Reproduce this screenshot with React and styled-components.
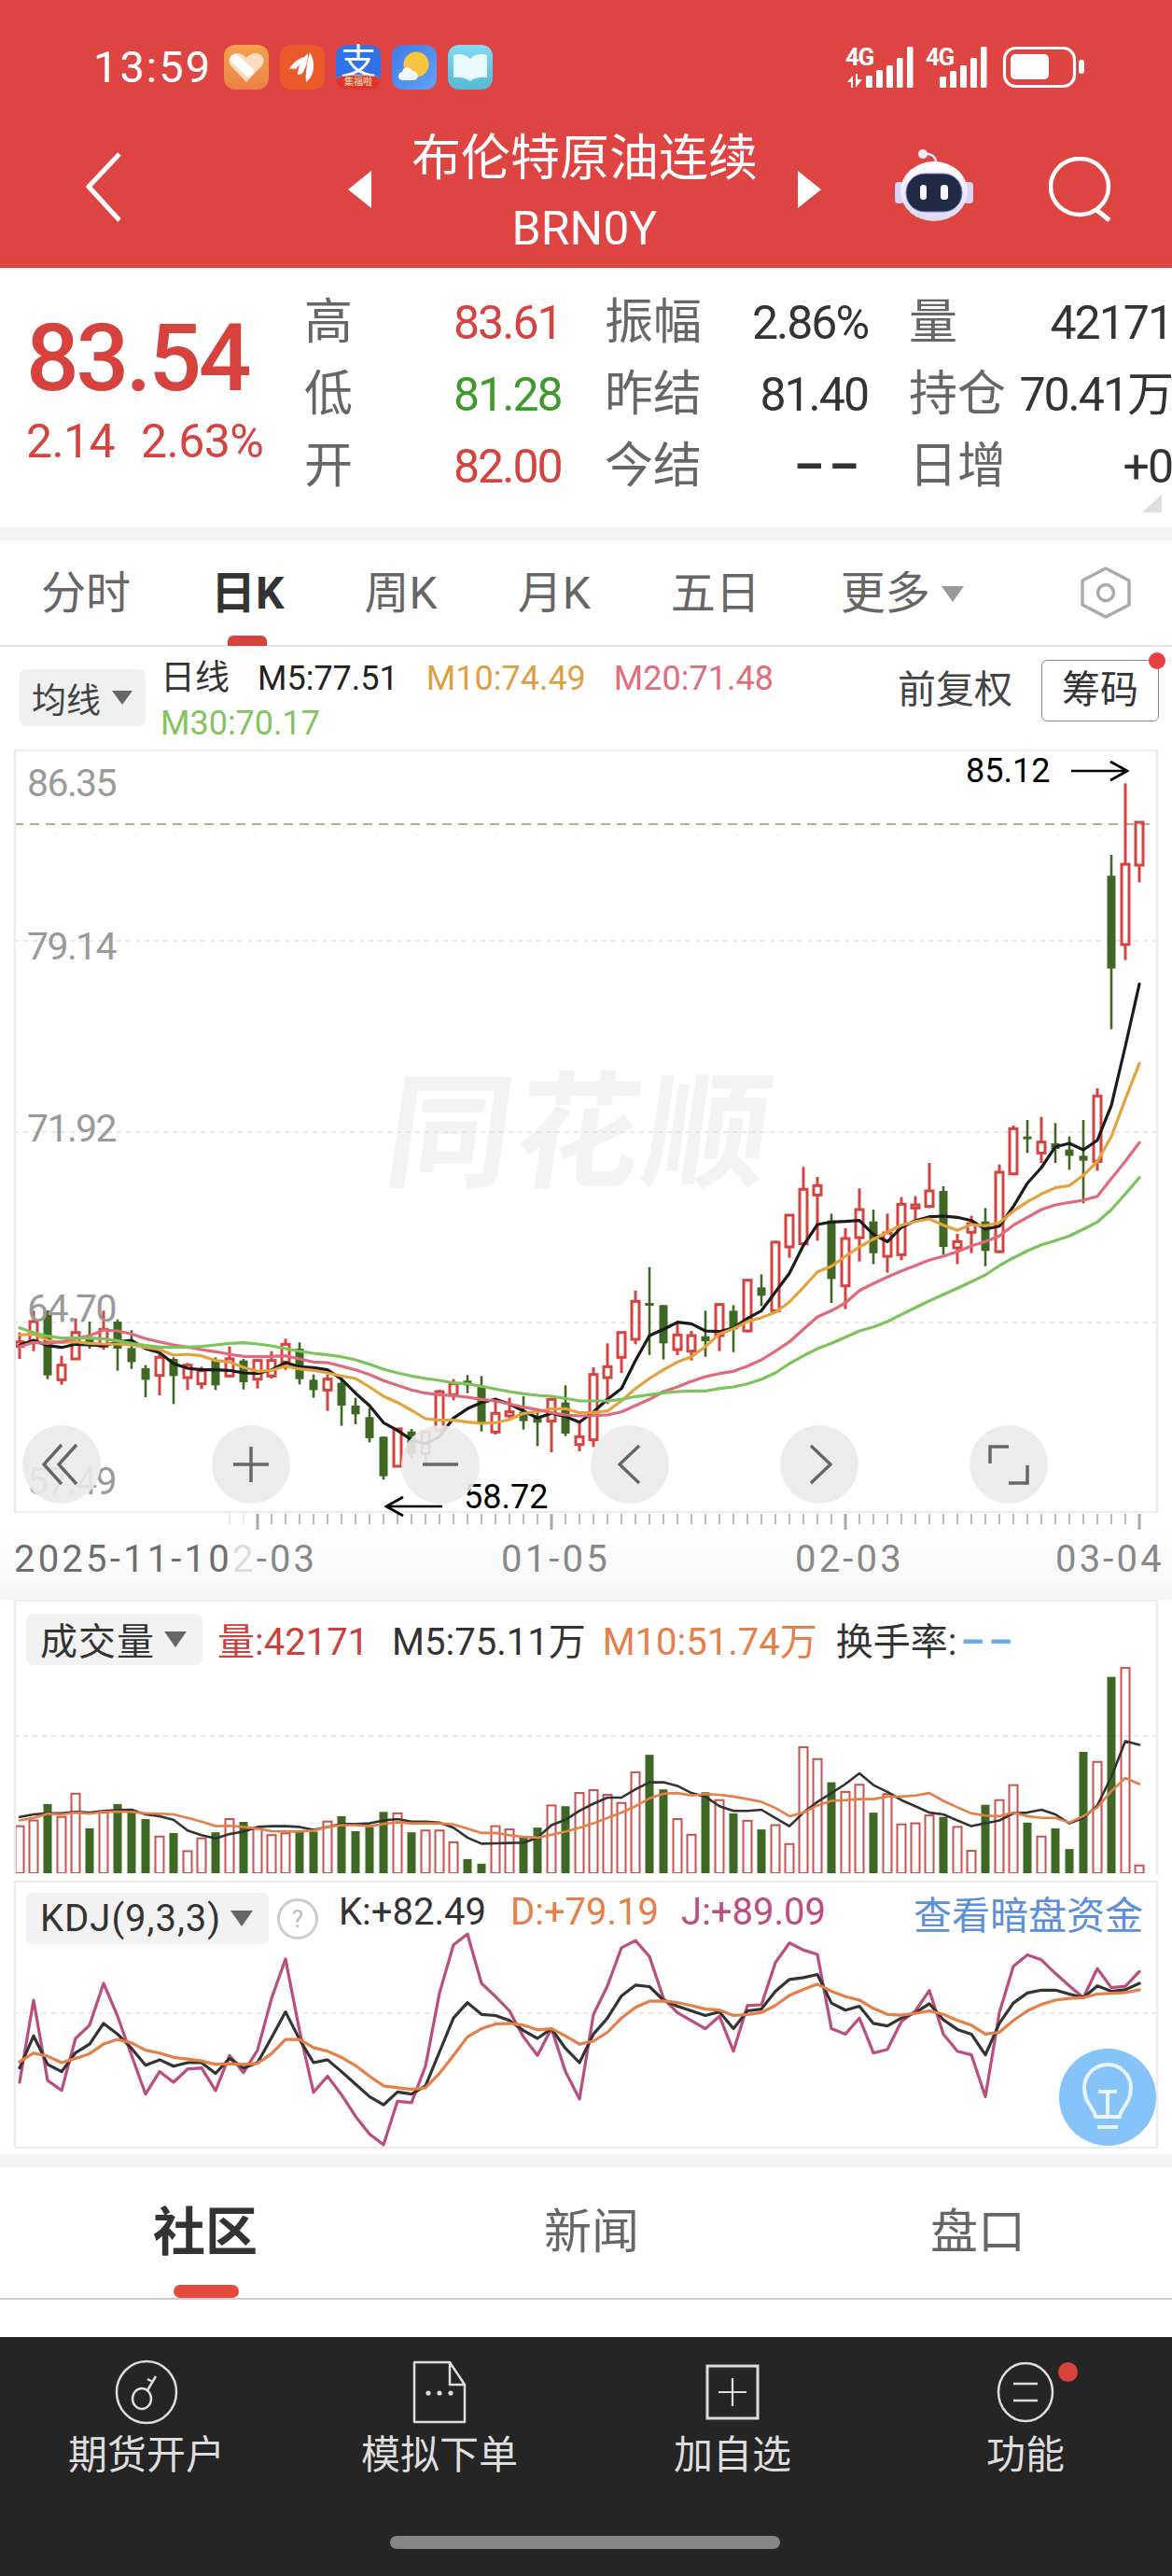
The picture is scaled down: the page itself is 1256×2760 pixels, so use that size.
import styled, { createGlobalStyle } from "styled-components";

// chart series, sampled row by row from the screen
const candles = [
  [560,645,590,605,1],[490,620,525,590,1],[490,710,490,698,0],[635,728,665,712,1],[515,645,560,645,1],
  [525,612,575,600,0],[490,615,550,605,1],[518,683,525,612,0],[553,677,610,655,0],[665,768,675,712,0],
  [625,762,640,698,1],[640,790,645,700,0],[658,745,665,705,1],[670,742,683,725,1],[640,745,650,730,0],
  [605,700,645,700,1],[645,743,650,720,0],[645,740,650,710,1],[620,708,650,700,1],[580,680,598,655,1],
  [592,727,612,710,0],[695,770,712,745,0],[695,812,710,745,1],[710,860,722,795,0],[770,855,795,823,0],
  [803,913,832,900,0],[895,1033,895,1022,0],[870,990,870,990,1],[870,965,878,950,0],[875,980,880,950,1],
  [745,880,750,875,1],[710,778,725,760,1],[697,755,715,730,0],[700,878,735,850,0],[770,888,820,880,1],
  [770,835,815,828,1],[765,872,815,845,0],[812,925,830,850,0],[770,945,775,845,1],[730,893,785,885,0],
  [850,942,895,920,1],[672,928,695,905,1],[595,790,670,705,1],[558,690,560,640,1],[425,598,460,582,1],
  [350,632,465,470,0],[472,647,472,595,0],[525,633,568,615,1],[555,650,570,620,1],[490,638,572,588,0],
  [465,620,470,570,1],[472,623,490,550,0],[390,560,392,555,1],[373,475,415,442,0],[265,495,270,490,1],
  [180,320,183,285,1],[28,275,100,275,1],[60,265,88,118,1],[178,465,200,388,0],[225,485,258,410,1],
  [97,332,165,255,1],[165,340,203,305,0],[178,368,240,315,1],[125,328,148,310,1],[122,195,150,160,1],
  [15,160,105,155,1],[90,310,105,285,0],[243,340,268,288,1],[185,305,210,238,1],[160,347,203,298,0],
  [20,305,45,300,1],[-105,55,-95,50,1],[-123,-17,-70,-63,0],[-133,15,-52,-17,1],[-113,15,-48,-30,0],
  [-70,37,-28,-8,0],[-123,145,-8,8,0],[-225,40,-200,10,1],[-975,-415,-908,-610,0],[-1205,-637,-945,-687,1],
  [-1080,-887,-1080,-942,1],
];
const ma5 = [600,585,602,608,598,600,603,590,585,612,625,660,675,680,680,682,690,692,680,657,670,673,680,710,755,795,850,875,905,918,895,835,805,785,775,790,812,835,820,830,848,815,775,740,650,570,550,527,532,555,557,545,515,490,430,370,280,213,205,203,200,245,268,222,200,188,186,190,200,228,218,155,80,30,-37,-48,-27,-58,-170,-360,-560];
const ma10 = [568,565,585,592,590,595,597,597,600,608,615,633,630,635,650,655,672,685,682,668,677,682,690,700,708,735,765,785,810,837,842,842,848,852,850,840,820,815,805,805,818,817,812,780,740,708,680,655,638,605,565,548,525,512,495,462,415,365,347,315,285,260,238,215,203,195,215,232,213,217,207,170,140,115,95,88,55,10,-70,-190,-305];
const ma20 = [605,592,595,590,580,570,552,555,565,580,590,600,607,615,622,630,637,638,637,635,645,655,657,668,680,695,715,730,745,755,760,763,768,775,780,790,800,808,818,825,828,827,825,815,795,775,750,735,717,702,692,685,668,648,620,590,550,510,490,465,425,403,382,362,345,327,315,300,282,268,250,215,190,165,150,142,135,122,65,10,-50];
const ma30 = [545,560,572,578,578,578,580,587,595,602,607,607,607,605,600,595,593,597,603,612,620,627,632,638,648,662,678,690,700,708,714,722,725,733,742,750,757,762,765,772,780,780,780,775,766,760,754,750,748,748,740,735,725,710,690,660,635,612,595,575,555,542,525,502,480,458,438,418,397,375,345,320,298,278,265,250,228,205,165,115,62];
// negative = down day
const volumes = [668,652,-606,642,577,-674,630,-606,-628,-648,697,-687,738,702,-685,648,-656,675,693,688,-680,-683,655,-640,-682,-670,-628,632,-685,680,680,713,-760,-773,668,677,-700,-672,610,-612,575,567,580,603,517,-468,-565,648,692,-573,595,-632,653,-677,665,718,447,480,-545,572,552,-630,578,663,660,638,-642,670,737,-608,595,553,-658,697,-674,-732,-460,488,-250,225,778];
const volM5 = [642,635,632,632,628,630,625,623,622,635,640,650,680,693,702,690,683,670,668,668,670,678,670,662,662,660,652,648,655,655,658,672,700,717,716,715,714,700,665,650,625,605,588,588,565,545,545,555,575,585,612,625,625,622,645,668,630,600,575,550,520,553,572,595,612,630,635,652,668,660,652,632,630,622,635,660,645,610,530,430,440];
const volM10 = [652,645,633,635,630,633,628,627,628,632,633,635,645,655,668,667,670,675,682,683,683,680,670,665,665,668,662,657,660,660,660,663,675,687,687,693,698,700,692,683,672,660,645,630,612,590,577,575,582,578,580,585,592,600,617,640,630,610,597,595,592,592,585,585,582,575,597,615,632,638,640,630,640,645,645,658,640,615,570,533,550];
const kdjJ = [1385,1155,1380,1408,1262,1225,1108,1200,1310,1418,1355,1385,1348,1345,1408,1310,1358,1295,1150,1040,1240,1413,1368,1420,1480,1530,1560,1438,1442,1340,1135,1000,970,1108,1145,1185,1258,1310,1235,1355,1432,1195,1115,1008,988,1033,1150,1190,1213,1235,1200,1298,1170,1168,1050,995,1015,1027,1235,1250,1205,1303,1293,1215,1185,1128,1250,1298,1308,1425,1190,1060,1028,1042,1080,1115,1148,1067,1120,1116,1075];
const kdjK = [1345,1255,1335,1355,1302,1278,1220,1250,1290,1337,1322,1340,1330,1330,1360,1318,1345,1330,1260,1188,1265,1330,1322,1355,1390,1425,1448,1412,1418,1395,1300,1205,1162,1195,1198,1212,1240,1262,1235,1290,1330,1250,1205,1143,1113,1117,1155,1172,1185,1198,1188,1235,1185,1180,1130,1097,1092,1083,1163,1183,1172,1220,1227,1205,1190,1165,1210,1237,1250,1308,1220,1163,1135,1127,1127,1138,1148,1115,1130,1126,1108];
const kdjD = [1328,1303,1312,1330,1318,1305,1278,1265,1275,1295,1303,1315,1320,1325,1335,1333,1335,1332,1305,1265,1265,1288,1298,1315,1338,1368,1395,1400,1405,1400,1360,1310,1258,1235,1222,1220,1225,1238,1235,1255,1278,1270,1245,1205,1175,1158,1157,1162,1170,1180,1183,1198,1195,1190,1170,1142,1125,1110,1130,1145,1155,1178,1195,1197,1192,1185,1195,1212,1225,1250,1245,1212,1185,1167,1155,1150,1148,1138,1136,1134,1126];

const xAt = (i) => 21 + 15 * i;
const priceY = (v) => 1240 + v / 3;
const lowerY = (v) => 1700 + v / 2.613;

const RED = "#d6433f";
const GREEN = "#3e6823";

function Series({ data, toY, color, width = 3.2 }) {
    const points = data.map((v, i) => `${xAt(i)},${toY(v).toFixed(1)}`).join(" ");
    return <polyline points={points} fill="none" stroke={color} strokeWidth={width} strokeLinejoin="round" strokeLinecap="round" />;
}

function Candle({ i, c }) {
    const [hi, lo, top, bottom, up] = c;
    const x = xAt(i);
    const color = up ? RED : GREEN;
    if (up) {
        return (
            <g stroke={color} fill="none">
                <line x1={x} x2={x} y1={priceY(hi)} y2={priceY(top)} strokeWidth="3" />
                <line x1={x} x2={x} y1={priceY(bottom)} y2={priceY(lo)} strokeWidth="3" />
                <rect x={x - 4} y={priceY(top)} width="8" height={Math.max(3, (bottom - top) / 3)} strokeWidth="3" />
            </g>
        );
    }
    return (
        <g fill={color} stroke={color}>
            <line x1={x} x2={x} y1={priceY(hi)} y2={priceY(lo)} strokeWidth="2.6" />
            <rect x={x - 4.5} y={priceY(top)} width="9" height={Math.max(3, (bottom - top) / 3)} stroke="none" />
        </g>
    );
}

function Grid({ ys, color = "#e2e2e2", dash = "5 5" }) {
    return ys.map((y) => <line key={y} x1="15" x2="1241" y1={y} y2={y} stroke={color} strokeWidth="1.3" strokeDasharray={dash} />);
}

export default function App() {
    return (
        <Page>
            <Global />
            <Header>
                <StatusBar>
                    <Time>13:59</Time>
                    <AppIcons>
                        <AppIcon $bg="linear-gradient(#f4a14f,#ec8146)">
                            <svg viewBox="0 0 48 48" width="48" height="48">
                                <path d="M24 40 7 22C3 16 7 9 14 9c4 0 7 2 10 5 3-3 6-5 10-5 7 0 11 7 7 13Z" fill="#fbdcc0" />
                                <path d="M12 15 27 29" stroke="#fff" strokeWidth="10" strokeLinecap="round" />
                            </svg>
                        </AppIcon>
                        <AppIcon $bg="#eb5a2b">
                            <svg viewBox="0 0 48 48" width="48" height="48">
                                <g fill="#fff">
                                    <path d="M10 26c4-7 10-12 17-13-3 6-7 9-10 13-3-1-5 0-7 0Z" />
                                    <path d="M19 32c0-9 5-17 11-23 0 8-2 15-6 22Z" />
                                    <path d="M28 40c-1-10 1-21 4-32 6 10 6 24-4 32Z" />
                                </g>
                            </svg>
                        </AppIcon>
                        <AppIcon $bg="#2f72ea">
                            <AlipayChar>支</AlipayChar>
                            <AlipayBand>集福啦</AlipayBand>
                        </AppIcon>
                        <AppIcon $bg="linear-gradient(135deg,#3f7bea,#62a1f4)">
                            <svg viewBox="0 0 48 48" width="48" height="48">
                                <circle cx="26" cy="21" r="13.5" fill="#f7c53f" />
                                <path d="M12 38c-6 0-7-8-1-9 1-6 9-6 11-1 7 0 8 10 1 10Z" fill="#f2f7fd" />
                            </svg>
                        </AppIcon>
                        <AppIcon $bg="linear-gradient(#7fdcef,#58b9d2)">
                            <svg viewBox="0 0 48 48" width="48" height="48">
                                <path d="M6 11c6-2 13-1 18 4v24c-5-4-12-5-18-4Zm36 0c-6-2-13-1-18 4v24c5-4 12-5 18-4Z" fill="#e9fbff" />
                            </svg>
                        </AppIcon>
                    </AppIcons>
                    <Signals>
                        <svg viewBox="0 0 256 46" width="256" height="46">
                            <g fill="#fff" stroke="none">
                                <path d="M2 39l6-7v13h-2v-6ZM11 30h2v6h5l-7 9Z" />
                                <rect x="22" y="32" width="7" height="13" rx="1.5" />
                                <rect x="33" y="26" width="7" height="19" rx="1.5" />
                                <rect x="44" y="21" width="7" height="24" rx="1.5" />
                                <rect x="55" y="13" width="6.5" height="32" rx="1.5" />
                                <rect x="66" y="1" width="6.5" height="44" rx="1.5" />
                                <rect x="101" y="33" width="7" height="12" rx="1.5" />
                                <rect x="112" y="27" width="7" height="18" rx="1.5" />
                                <rect x="123" y="21" width="7" height="24" rx="1.5" />
                                <rect x="134" y="13" width="7" height="32" rx="1.5" />
                                <rect x="145" y="1" width="6.5" height="44" rx="1.5" />
                                <rect x="177" y="9" width="41" height="27" rx="5" />
                                <rect x="250" y="15" width="6" height="15" rx="3" />
                            </g>
                            <rect x="170.5" y="2.5" width="75" height="41" rx="12" fill="none" stroke="#fff" strokeWidth="3.2" />
                        </svg>
                        <FourG $left="0">4G</FourG>
                        <FourG $left="86">4G</FourG>
                    </Signals>
                </StatusBar>
                <NavRow>
                    <BackButton>
                        <svg viewBox="0 0 38 75" width="38" height="75"><path d="M36 2 3 37l33 36" fill="none" stroke="#fff" strokeWidth="5" /></svg>
                    </BackButton>
                    <TitleBlock>
                        <SideArrow $dir="left" />
                        <TitleText>
                            <Title>布伦特原油连续</Title>
                            <Code>BRN0Y</Code>
                        </TitleText>
                        <SideArrow $dir="right" />
                    </TitleBlock>
                    <NavTools>
                        <svg viewBox="0 0 84 78" width="84" height="78">
                            <defs>
                                <linearGradient id="helmet" x1="0" y1="0" x2="0" y2="1">
                                    <stop offset="0" stopColor="#fff" />
                                    <stop offset="1" stopColor="#ddd9f3" />
                                </linearGradient>
                            </defs>
                            <path d="M30 5c8-1 14 2 14 9" fill="none" stroke="#f1eefb" strokeWidth="2.5" />
                            <circle cx="30" cy="5" r="5" fill="#f1eefb" />
                            <rect x="0" y="35" width="10" height="23" rx="4" fill="#d9d4f1" />
                            <rect x="74" y="35" width="10" height="23" rx="4" fill="#d9d4f1" />
                            <ellipse cx="42" cy="45" rx="36" ry="32" fill="url(#helmet)" />
                            <rect x="12" y="26" width="60" height="41" rx="20" fill="#1f2a44" stroke="#8f7fd6" strokeWidth="1" />
                            <rect x="27" y="38" width="7" height="16" rx="3.5" fill="#f6f7fd" />
                            <rect x="49" y="38" width="8" height="16" rx="3.5" fill="#f6f7fd" />
                        </svg>
                        <SearchIcon viewBox="0 0 68 70" width="68" height="70"><ellipse cx="33" cy="32" rx="31" ry="30" fill="none" stroke="#fff" strokeWidth="4.5" /><path d="M50 56 65 68" stroke="#fff" strokeWidth="5" /></SearchIcon>
                    </NavTools>
                </NavRow>
            </Header>

            <Quote>
                <PriceCol>
                    <LastPrice>83.54</LastPrice>
                    <ChangeRow>
                        <span>2.14</span>
                        <span>2.63%</span>
                    </ChangeRow>
                </PriceCol>
                <StatGrid>
                    <StatLabel>高</StatLabel><StatValue $color={RED}>83.61</StatValue>
                    <StatLabel>振幅</StatLabel><StatValue $right>2.86%</StatValue><i />
                    <StatLabel>量</StatLabel><StatValue $right>42171</StatValue>
                    <StatLabel>低</StatLabel><StatValue $color="#3f9a2c">81.28</StatValue>
                    <StatLabel>昨结</StatLabel><StatValue $right>81.40</StatValue><i />
                    <StatLabel>持仓</StatLabel><StatValue $right>70.41万</StatValue>
                    <StatLabel>开</StatLabel><StatValue $color={RED}>82.00</StatValue>
                    <StatLabel>今结</StatLabel><StatValue $right><EmptyDash>––</EmptyDash></StatValue><i />
                    <StatLabel>日增</StatLabel><StatValue $right>+0</StatValue>
                </StatGrid>
                <CornerMark />
            </Quote>
            <Band />

            <PeriodTabs>
                <PeriodTab>分时</PeriodTab>
                <PeriodTab $active>日K</PeriodTab>
                <PeriodTab>周K</PeriodTab>
                <PeriodTab>月K</PeriodTab>
                <PeriodTab>五日</PeriodTab>
                <PeriodTab>更多<Caret $size={12} $color="#9a9a9a" /></PeriodTab>
                <HexButton>
                    <svg viewBox="0 0 56 56" width="56" height="56"><path d="M28 2 53 15v26L28 54 3 41V15Z" fill="none" stroke="#aaa" strokeWidth="3.5" strokeLinejoin="round" /><circle cx="28" cy="28" r="8.5" fill="none" stroke="#aaa" strokeWidth="3.5" /></svg>
                </HexButton>
            </PeriodTabs>

            <MaBar>
                <MaPill>均线<Caret $size={11} $color="#666" /></MaPill>
                <MaValues>
                    <MaText $color="#333" $cjk>日线</MaText>
                    <MaText $color="#222">M5:77.51</MaText>
                    <MaText $color="#dca043">M10:74.49</MaText>
                    <MaText $color="#e26c7c">M20:71.48</MaText>
                    <MaText $color="#82c45f">M30:70.17</MaText>
                </MaValues>
                <AdjustText>前复权</AdjustText>
                <ChipButton>筹码<RedDot /></ChipButton>
            </MaBar>

            <PriceChart>
                <Watermark>同花顺</Watermark>
                <ChartSvg viewBox="17 804 1222 814" width="1222" height="814">
                    <line x1="15" x2="1241" y1="882" y2="882" stroke="#b9ac90" strokeWidth="2" strokeDasharray="10 7" />
                    <line x1="15" x2="1241" y1="894" y2="894" stroke="#efefef" strokeWidth="1.2" strokeDasharray="3 40" />
                    <Grid ys={[1007, 1212, 1416]} />
                    {candles.map((c, i) => <Candle key={i} i={i} c={c} />)}
                    <Series data={ma5} toY={priceY} color="#1b1b1b" />
                    <Series data={ma10} toY={priceY} color="#e3a23c" />
                    <Series data={ma20} toY={priceY} color="#e2697a" />
                    <Series data={ma30} toY={priceY} color="#7cc45a" />
                </ChartSvg>
                <AxisLabel $top={14}>86.35</AxisLabel>
                <AxisLabel $top={189}>79.14</AxisLabel>
                <AxisLabel $top={384}>71.92</AxisLabel>
                <AxisLabel $top={577}>64.70</AxisLabel>
                <AxisLabel $top={762}>57.49</AxisLabel>
                <Extreme $left={1018} $top={1}>
                    85.12
                    <Arrow $up>
                        <svg viewBox="0 0 62 24" width="62" height="24"><path d="M0 12h58M42 2l18 10-18 10" fill="none" stroke="#000" strokeWidth="2.6" /></svg>
                    </Arrow>
                </Extreme>
                <Extreme $left={395} $top={779}>
                    <Arrow>
                        <svg viewBox="0 0 62 24" width="62" height="24"><path d="M62 12H4M20 2 2 12l18 10" fill="none" stroke="#000" strokeWidth="2.6" /></svg>
                    </Arrow>
                    58.72
                </Extreme>
                <ChartButtons>
                    <RoundButton><svg viewBox="0 0 84 84" width="84" height="84"><path d="M42 21 23 42l19 21M58 21 39 42l19 21" fill="none" stroke="#666" strokeWidth="3.4" /></svg></RoundButton>
                    <RoundButton><svg viewBox="0 0 84 84" width="84" height="84"><path d="M23 42h38M42 23v38" fill="none" stroke="#666" strokeWidth="3.4" /></svg></RoundButton>
                    <RoundButton><svg viewBox="0 0 84 84" width="84" height="84"><path d="M23 42h38" fill="none" stroke="#666" strokeWidth="3.4" /></svg></RoundButton>
                    <RoundButton><svg viewBox="0 0 84 84" width="84" height="84"><path d="M52 22 31 42l21 20" fill="none" stroke="#666" strokeWidth="3.4" /></svg></RoundButton>
                    <RoundButton><svg viewBox="0 0 84 84" width="84" height="84"><path d="M33 22l21 20-21 20" fill="none" stroke="#666" strokeWidth="3.4" /></svg></RoundButton>
                    <RoundButton><svg viewBox="0 0 84 84" width="84" height="84"><path d="M42 23H22v18M62 43v19H42" fill="none" stroke="#666" strokeWidth="3.4" /></svg></RoundButton>
                </ChartButtons>
            </PriceChart>

            <DateAxis>
                <svg viewBox="0 0 1256 20" width="1256" height="20">
                    {candles.map((c, i) => i >= 15 && (
                        <line key={i} x1={xAt(i)} x2={xAt(i)} y1="1" y2={[17, 38, 59, 80].includes(i) ? 18 : 12}
                            stroke={i < 17 ? "#e4e4e4" : "#a9a9a9"} strokeWidth={[17, 38, 59, 80].includes(i) ? 3 : 1.6} />
                    ))}
                </svg>
                <DateRow>
                    <DateCell $width={522}>
                        <FirstDate>2025-11-10</FirstDate>
                        <FadedDigit>2</FadedDigit>-03
                    </DateCell>
                    <DateCell $width={315}>01-05</DateCell>
                    <DateCell $width={279}>02-03</DateCell>
                    <DateCell>03-04</DateCell>
                </DateRow>
            </DateAxis>

            <VolumePanel>
                <PanelHead>
                    <IndicatorPill $width={189}>成交量<Caret $size={12} $color="#666" /></IndicatorPill>
                    <PanelStat $color="#c9403c" $ml={16}>量:42171</PanelStat>
                    <PanelStat $color="#333" $ml={25}>M5:75.11万</PanelStat>
                    <PanelStat $color="#e67e48" $ml={18}>M10:51.74万</PanelStat>
                    <PanelStat $color="#333" $ml={20}>换手率:<Dashes>––</Dashes></PanelStat>
                </PanelHead>
                <LowerSvg viewBox="17 1715 1222 291" width="1222" height="291">
                    <Grid ys={[1859]} />
                    {volumes.map((v, i) => {
                        const top = lowerY(Math.abs(v));
                        return v > 0
                            ? <rect key={i} x={xAt(i) - 4.5} y={top} width="9" height={2006 - top} fill="none" stroke="#c9524e" strokeWidth="2" />
                            : <rect key={i} x={xAt(i) - 4.5} y={top} width="9" height={2007 - top} fill={GREEN} />;
                    })}
                    <Series data={volM5} toY={lowerY} color="#333" width={2.6} />
                    <Series data={volM10} toY={lowerY} color="#e67e48" width={2.6} />
                </LowerSvg>
            </VolumePanel>

            <KdjPanel>
                <PanelHead>
                    <IndicatorPill $width={260}>KDJ(9,3,3)<Caret $size={12} $color="#666" /></IndicatorPill>
                    <HelpMark>?</HelpMark>
                    <PanelStat $color="#333" $ml={22} $raise>K:+82.49</PanelStat>
                    <PanelStat $color="#e67e48" $ml={26} $raise>D:+79.19</PanelStat>
                    <PanelStat $color="#bb4d80" $ml={24} $raise>J:+89.09</PanelStat>
                    <DarkPoolLink>查看暗盘资金</DarkPoolLink>
                </PanelHead>
                <LowerSvg viewBox="17 2016 1222 283" width="1222" height="283">
                    <Grid ys={[2156]} />
                    <Series data={kdjJ} toY={lowerY} color="#bb4d80" />
                    <Series data={kdjK} toY={lowerY} color="#333" />
                    <Series data={kdjD} toY={lowerY} color="#e67e48" />
                </LowerSvg>
                <BulbButton>
                    <svg viewBox="0 0 104 104" width="104" height="104"><path d="M39 73c0-8-12-14-12-31a24 24 0 0 1 50 0c0 17-12 23-12 31ZM41 84h22M42 46h20M52 46v27" fill="none" stroke="#e8f4ff" strokeWidth="4" strokeLinejoin="round" /></svg>
                </BulbButton>
            </KdjPanel>
            <Band $top={6} />

            <NewsTabs>
                <NewsTab $active>社区</NewsTab>
                <NewsTab>新闻</NewsTab>
                <NewsTab>盘口</NewsTab>
            </NewsTabs>
            <NewsBody />

            <Footer>
                <FooterItems>
                    <FooterItem>
                        <FootIcon>
                            <svg viewBox="0 0 70 70" width="70" height="70"><ellipse cx="35" cy="35" rx="32" ry="33" fill="none" stroke="#ddd" strokeWidth="2.5" /><ellipse cx="30" cy="42" rx="10" ry="11" fill="none" stroke="#ddd" strokeWidth="2.5" /><path d="M36 33 45 18M42 24l-6-3" fill="none" stroke="#ddd" strokeWidth="2.5" /></svg>
                        </FootIcon>
                        期货开户
                    </FooterItem>
                    <FooterItem>
                        <FootIcon>
                            <svg viewBox="0 0 70 70" width="70" height="70"><path d="M8 3h38l16 24v40H8ZM46 3v24h16" fill="none" stroke="#ddd" strokeWidth="2.5" strokeLinejoin="round" /><circle cx="23" cy="36" r="2.6" fill="#ddd" /><circle cx="35" cy="36" r="2.6" fill="#ddd" /><circle cx="47" cy="36" r="2.6" fill="#ddd" /></svg>
                        </FootIcon>
                        模拟下单
                    </FooterItem>
                    <FooterItem>
                        <FootIcon>
                            <svg viewBox="0 0 70 70" width="70" height="70"><rect x="8" y="7" width="54" height="56" fill="none" stroke="#ddd" strokeWidth="3" /><path d="M20 35h30M35 20v30" fill="none" stroke="#ddd" strokeWidth="2.2" /></svg>
                        </FootIcon>
                        加自选
                    </FooterItem>
                    <FooterItem>
                        <FootIcon>
                            <svg viewBox="0 0 70 70" width="70" height="70"><ellipse cx="35" cy="35" rx="29" ry="31" fill="none" stroke="#ddd" strokeWidth="2.5" /><path d="M22 26h26M22 44h26" fill="none" stroke="#ddd" strokeWidth="2.5" /></svg>
                            <FootDot />
                        </FootIcon>
                        功能
                    </FooterItem>
                </FooterItems>
                <HomeBar />
            </Footer>
        </Page>
    );
}

const Global = createGlobalStyle`
    html, body {
        margin: 0;
        padding: 0;
        background: #fff;
    }
    body {
        font-family: Roboto, "Noto Sans CJK SC", sans-serif;
    }
`

const Page = styled.div`
    width: 1256px;
    height: 2760px;
    overflow: hidden;
    background: #fff;
`

const Header = styled.div`
    height: 287px;
    background: #dd4442;
    color: #fff;
`

const StatusBar = styled.div`
    display: flex;
    align-items: center;
    height: 48px;
    padding: 48px 0 0 100px;
`

const Time = styled.div`
    width: 140px;
    font-size: 47px;
    letter-spacing: 2px;
    line-height: 48px;
`

const AppIcons = styled.div`
    display: flex;
    gap: 12px;
`

const AppIcon = styled.div`
    position: relative;
    width: 48px;
    height: 48px;
    border-radius: 12px;
    background: ${(p) => p.$bg};
`

const AlipayChar = styled.span`
    position: absolute;
    top: -1px;
    left: 5px;
    font-size: 38px;
    line-height: 38px;
    color: #fff;
`

const AlipayBand = styled.span`
    position: absolute;
    left: 0;
    right: 0;
    bottom: 0;
    box-sizing: border-box;
    height: 16px;
    border-top: 1.5px solid #f3b98f;
    border-radius: 50% 50% 12px 12px / 5px 5px 12px 12px;
    background: #e2362b;
    font-size: 10px;
    line-height: 14px;
    text-align: center;
    color: #ffe6c8;
`

const Signals = styled.div`
    position: relative;
    margin-left: 378px;
    width: 256px;
    height: 46px;
`

const FourG = styled.span`
    position: absolute;
    left: ${(p) => p.$left}px;
    top: -1px;
    font-size: 26px;
    line-height: 26px;
    font-weight: 700;
    letter-spacing: -1.5px;
    color: #fff;
`

const NavRow = styled.div`
    display: flex;
    height: 191px;
`

const BackButton = styled.div`
    width: 281px;
    padding: 67px 0 0 92px;
`

const TitleBlock = styled.div`
    display: flex;
    align-items: flex-start;
    justify-content: space-between;
    width: 507px;
`

const SideArrow = styled.div`
    width: 0;
    height: 0;
    margin-top: 87px;
    border-top: 20px solid transparent;
    border-bottom: 20px solid transparent;
    ${(p) => p.$dir === "left" ? "border-right: 25px solid #fff;" : "border-left: 25px solid #fff;"}
`

const TitleText = styled.div`
    flex: 1;
    text-align: center;
`

const Title = styled.div`
    margin-top: 44px;
    font-size: 53px;
    line-height: 60px;
    white-space: nowrap;
`

const Code = styled.div`
    margin-top: 20px;
    font-size: 50px;
    line-height: 50px;
`

const NavTools = styled.div`
    display: flex;
    align-items: flex-start;
    gap: 81px;
    padding: 64px 0 0 79px;
`

const SearchIcon = styled.svg`
    margin-top: 8px;
`

const Quote = styled.div`
    position: relative;
    display: flex;
    height: 278px;
`

const PriceCol = styled.div`
    width: 328px;
    padding-left: 28px;
    box-sizing: border-box;
`

const LastPrice = styled.div`
    margin-top: 54px;
    font-size: 100px;
    line-height: 86px;
    font-weight: 500;
    letter-spacing: -3.4px;
    color: ${RED};
`

const ChangeRow = styled.div`
    display: flex;
    gap: 28px;
    margin-top: 26px;
    font-size: 50px;
    line-height: 40px;
    letter-spacing: -0.6px;
    color: ${RED};
`

const StatGrid = styled.div`
    display: grid;
    grid-template-columns: 158px 164px 120px 160px 46px 100px 180px;
    grid-auto-rows: 77px;
    align-items: center;
    padding-top: 20px;
`

const StatLabel = styled.div`
    margin-left: -2px;
    font-size: 52px;
    line-height: 60px;
    color: #666;
    white-space: nowrap;
`

const StatValue = styled.div`
    font-size: 50px;
    line-height: 60px;
    letter-spacing: -2px;
    color: ${(p) => p.$color || "#333"};
    text-align: ${(p) => p.$right ? "right" : "left"};
    white-space: nowrap;
`

const EmptyDash = styled.span`
    margin-right: 4px;
    font-weight: 700;
    letter-spacing: 6px;
`

const CornerMark = styled.div`
    position: absolute;
    right: 11px;
    bottom: 16px;
    width: 21px;
    height: 19px;
    background: #ddd;
    clip-path: polygon(100% 0, 100% 100%, 0 100%);
`

const Band = styled.div`
    height: 14px;
    margin-top: ${(p) => p.$top || 0}px;
    background: #f4f4f4;
`

const PeriodTabs = styled.div`
    position: relative;
    display: flex;
    align-items: center;
    gap: 86px;
    height: 112px;
    padding: 0 44px;
    border-bottom: 2px solid #e6e6e6;
`

const PeriodTab = styled.div`
    position: relative;
    display: flex;
    align-items: center;
    gap: 12px;
    margin-top: 2px;
    font-size: 48px;
    line-height: 50px;
    font-weight: ${(p) => p.$active ? 700 : 400};
    color: ${(p) => p.$active ? "#333" : "#666"};
    ${(p) => p.$active && `
        &::after {
            content: "";
            position: absolute;
            left: 50%;
            margin-left: -21px;
            bottom: -31px;
            width: 42px;
            height: 11px;
            border-radius: 6px 6px 0 0;
            background: ${RED};
        }
    `}
`

const HexButton = styled.div`
    position: absolute;
    left: 1157px;
    top: 28px;
    width: 56px;
    height: 56px;
`

const Caret = styled.i`
    display: inline-block;
    width: 0;
    height: 0;
    border-left: ${(p) => p.$size}px solid transparent;
    border-right: ${(p) => p.$size}px solid transparent;
    border-top: ${(p) => Math.round(p.$size * 1.4)}px solid ${(p) => p.$color};
`

const MaBar = styled.div`
    position: relative;
    display: flex;
    height: 110px;
`

const MaPill = styled.div`
    display: flex;
    align-items: center;
    gap: 12px;
    box-sizing: border-box;
    width: 135px;
    height: 61px;
    margin: 24px 0 0 21px;
    padding-left: 13px;
    border-radius: 7px;
    background: #f0f0f0;
    font-size: 37px;
    color: #444;
`

const MaValues = styled.div`
    display: flex;
    flex-wrap: wrap;
    align-content: flex-start;
    gap: 4px 30px;
    width: 680px;
    margin: 12px 0 0 16px;
`

const MaText = styled.span`
    font-size: ${(p) => p.$cjk ? 37 : 36}px;
    line-height: 44px;
    color: ${(p) => p.$color};
    white-space: nowrap;
`

const AdjustText = styled.div`
    position: absolute;
    left: 962px;
    top: 24px;
    font-size: 41px;
    line-height: 44px;
    color: #444;
`

const ChipButton = styled.div`
    position: absolute;
    left: 1116px;
    top: 14px;
    box-sizing: border-box;
    width: 126px;
    height: 66px;
    border: 1.5px solid #888;
    border-radius: 6px;
    font-size: 41px;
    line-height: 62px;
    text-align: center;
    color: #333;
`

const RedDot = styled.i`
    position: absolute;
    right: -8px;
    top: -9px;
    width: 18px;
    height: 18px;
    border-radius: 50%;
    background: #e8403c;
`

const PriceChart = styled.div`
    position: relative;
    box-sizing: border-box;
    width: 1226px;
    height: 818px;
    margin-left: 15px;
    border: 2px solid #ececec;
`

const ChartSvg = styled.svg`
    position: relative;
    display: block;
    z-index: 1;
`

const Watermark = styled.div`
    position: absolute;
    left: 398px;
    top: 344px;
    font-size: 134px;
    line-height: 134px;
    letter-spacing: 4px;
    font-weight: 700;
    color: #f3f3f3;
    transform: skewX(-8deg);
    white-space: nowrap;
`

const AxisLabel = styled.div`
    position: absolute;
    z-index: 2;
    left: 12px;
    top: ${(p) => p.$top}px;
    font-size: 41px;
    line-height: 40px;
    letter-spacing: -1.6px;
    color: #9a9a9a;
`

const Extreme = styled.div`
    position: absolute;
    z-index: 2;
    left: ${(p) => p.$left}px;
    top: ${(p) => p.$top}px;
    display: flex;
    align-items: center;
    gap: 23px;
    font-size: 36px;
    line-height: 40px;
    color: #000;
`

const Arrow = styled.span`
    display: block;
    height: 24px;
    margin-top: ${(p) => p.$up ? -16 : 4}px;
`

const ChartButtons = styled.div`
    position: absolute;
    z-index: 3;
    left: 7px;
    top: 722px;
    display: flex;
    gap: 119px;
`

const RoundButton = styled.div`
    width: 84px;
    height: 84px;
    border-radius: 50%;
    background: rgba(234, 234, 234, 0.9);
`

const DateAxis = styled.div`
    height: 93px;
    background: linear-gradient(#fff 20%, #f5f5f5 100%);
`

const DateRow = styled.div`
    display: flex;
    padding: 6px 0 0 15px;
    font-size: 40px;
    line-height: 40px;
    letter-spacing: 3.2px;
    color: #888;
`

const DateCell = styled.div`
    flex: none;
    width: ${(p) => p.$width ? `${p.$width}px` : "auto"};
    white-space: nowrap;
`

const FirstDate = styled.span`
    color: #6e6e6e;
`

const FadedDigit = styled.span`
    color: #dedede;
`

const VolumePanel = styled.div`
    position: relative;
    box-sizing: border-box;
    width: 1226px;
    height: 295px;
    margin-left: 15px;
    border: 2px solid #ececec;
    border-bottom-width: 0;
`

const KdjPanel = styled.div`
    position: relative;
    box-sizing: border-box;
    width: 1226px;
    height: 287px;
    margin: 6px 0 0 15px;
    border: 2px solid #ececec;
`

const PanelHead = styled.div`
    position: absolute;
    z-index: 2;
    left: 11px;
    top: 11px;
    right: 0;
    display: flex;
    align-items: center;
`

const IndicatorPill = styled.div`
    display: flex;
    align-items: center;
    justify-content: space-between;
    box-sizing: border-box;
    width: ${(p) => p.$width}px;
    height: 55px;
    padding: 0 17px 0 15px;
    border-radius: 7px;
    background: #f2f2f2;
    font-size: 40px;
    letter-spacing: 1px;
    color: #333;
`

const PanelStat = styled.div`
    margin-left: ${(p) => p.$ml}px;
    margin-top: ${(p) => p.$raise ? -14 : 0}px;
    font-size: 40px;
    color: ${(p) => p.$color};
    white-space: nowrap;
`

const Dashes = styled.span`
    margin-left: 4px;
    font-weight: 700;
    color: #6aaee8;
    letter-spacing: 5px;
`

const HelpMark = styled.div`
    width: 38px;
    height: 38px;
    margin-left: 9px;
    border: 3px solid #ccc;
    border-radius: 50%;
    font-size: 26px;
    line-height: 38px;
    text-align: center;
    color: #bbb;
`

const DarkPoolLink = styled.div`
    margin: -14px 0 0 auto;
    padding-right: 14px;
    font-size: 41px;
    color: #5b8fdc;
    white-space: nowrap;
`

const LowerSvg = styled.svg`
    display: block;
`

const BulbButton = styled.div`
    position: absolute;
    right: 0;
    bottom: 1px;
    width: 104px;
    height: 104px;
    border-radius: 50%;
    background: #86c3f8;
`

const NewsTabs = styled.div`
    display: grid;
    grid-template-columns: repeat(3, 414px);
    height: 140px;
    padding-left: 13px;
    border-bottom: 2px solid #ccc;
`

const NewsTab = styled.div`
    position: relative;
    padding-top: 38px;
    text-align: center;
    font-size: ${(p) => p.$active ? 56 : 51}px;
    line-height: 64px;
    font-weight: ${(p) => p.$active ? 700 : 400};
    color: ${(p) => p.$active ? "#333" : "#666"};
    ${(p) => p.$active && `
        &::after {
            content: "";
            position: absolute;
            left: 173px;
            bottom: 0;
            width: 70px;
            height: 14px;
            border-radius: 7px;
            background: #e54b3c;
        }
    `}
`

const NewsBody = styled.div`
    height: 40px;
`

const Footer = styled.div`
    height: 257px;
    background: #252525;
`

const FooterItems = styled.div`
    display: grid;
    grid-template-columns: repeat(4, 314px);
    padding-top: 24px;
`

const FooterItem = styled.div`
    display: flex;
    flex-direction: column;
    align-items: center;
    font-size: 42px;
    line-height: 50px;
    color: #ddd;
`

const FootIcon = styled.div`
    position: relative;
    width: 70px;
    height: 70px;
    margin-bottom: 8px;
`

const FootDot = styled.i`
    position: absolute;
    left: 70px;
    top: 3px;
    width: 21px;
    height: 21px;
    border-radius: 50%;
    background: #d8423c;
`

const HomeBar = styled.div`
    width: 418px;
    height: 14px;
    margin: 61px 0 0 418px;
    border-radius: 7px;
    background: #858585;
`
